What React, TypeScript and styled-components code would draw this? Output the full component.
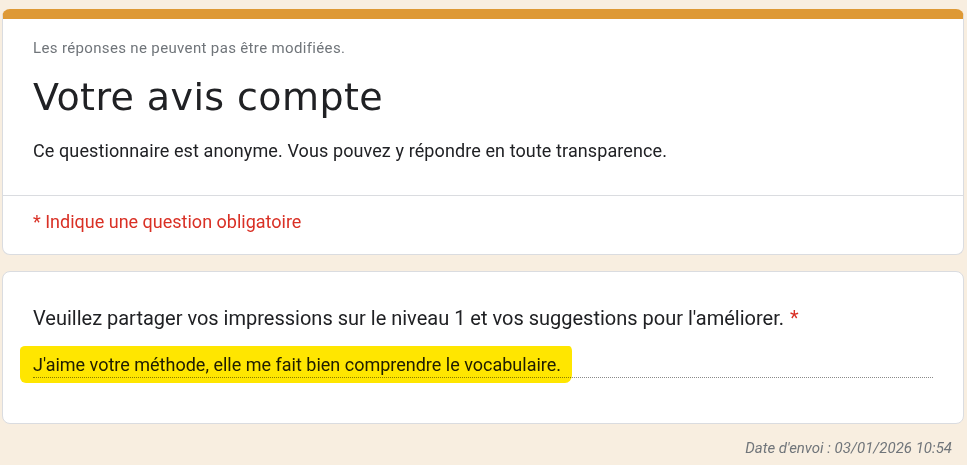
import React from "react";
import styled, { createGlobalStyle } from "styled-components";

const Global = createGlobalStyle`
  html, body { margin: 0; padding: 0; background: #f8eee0; }
  body { font-family: Roboto, "Liberation Sans", Arial, sans-serif; }
`;

const Page = styled.div`
  width: 967px;
  height: 465px;
  box-sizing: border-box;
  padding: 9px 3px 0 2px;
  display: flex;
  flex-direction: column;
  gap: 16px;
  overflow: hidden;
`;

const Card = styled.div<{ $accent?: boolean }>`
  position: relative;
  background: #fff;
  border: 1px solid #dadce0;
  border-radius: 8px;
  box-sizing: border-box;
  overflow: hidden;
  ${(p) => (p.$accent ? "border-top: 10px solid #de9935;" : "")}
`;

const Header = styled.div`
  padding: 19px 30px 32px 30px;
`;

const Note = styled.div`
  font-size: 15px;
  letter-spacing: 0.35px;
  color: #70757a;
  line-height: 20px;
`;

const Title = styled.h1`
  margin: 15px 0 0 0;
  font-family: "DejaVu Sans", sans-serif;
  font-weight: 400;
  font-size: 38px;
  line-height: 48px;
  color: #202124;
  letter-spacing: 0.4px;
`;

const Desc = styled.p`
  margin: 18px 0 0 0;
  font-size: 18px;
  line-height: 24px;
  letter-spacing: 0.1px;
  color: #202124;
`;

const Divider = styled.div`
  border-top: 1px solid #dadce0;
`;

const Required = styled.div`
  padding: 14px 30px 20px;
  font-size: 18px;
  line-height: 24px;
  color: #d93025;
`;

const QCard = styled(Card)`
  padding: 32px 30px 45px 30px;
`;

const Question = styled.div`
  font-size: 20px;
  line-height: 28px;
  color: #202124;
`;

const Star = styled.span`
  color: #d93025;
  margin-left: 6px;
`;

const AnswerRow = styled.div`
  position: relative;
  margin-top: 21px;
  border-bottom: 1px dotted #8a8a8a;
  width: 900px;
  height: 24px;
`;

const AnswerText = styled.span`
  font-size: 18px;
  line-height: 24px;
  color: #202124;
  white-space: nowrap;
`;

const Marker = styled.span`
  position: absolute;
  left: -13px;
  top: -7px;
  width: 552px;
  height: 37px;
  background: #ffe600;
  mix-blend-mode: multiply;
  border-radius: 5px 3px 7px 6px / 4px 5px 8px 6px;
  pointer-events: none;
`;

const Footer = styled.div`
  text-align: right;
  font-size: 15px;
  line-height: 20px;
  font-style: italic;
  color: #70757a;
  padding-right: 12px;
  margin-top: -2px;
`;

export default function App() {
  return (
    <>
      <Global />
      <Page>
        <Card $accent>
          <Header>
            <Note>Les réponses ne peuvent pas être modifiées.</Note>
            <Title>Votre avis compte</Title>
            <Desc>Ce questionnaire est anonyme. Vous pouvez y répondre en toute transparence.</Desc>
          </Header>
          <Divider />
          <Required>* Indique une question obligatoire</Required>
        </Card>
        <QCard>
          <Question>
            Veuillez partager vos impressions sur le niveau 1 et vos suggestions pour l'améliorer.
            <Star>*</Star>
          </Question>
          <AnswerRow>
            <AnswerText>J'aime votre méthode, elle me fait bien comprendre le vocabulaire.</AnswerText>
            <Marker />
          </AnswerRow>
        </QCard>
        <Footer>Date d'envoi : 03/01/2026 10:54</Footer>
      </Page>
    </>
  );
}
